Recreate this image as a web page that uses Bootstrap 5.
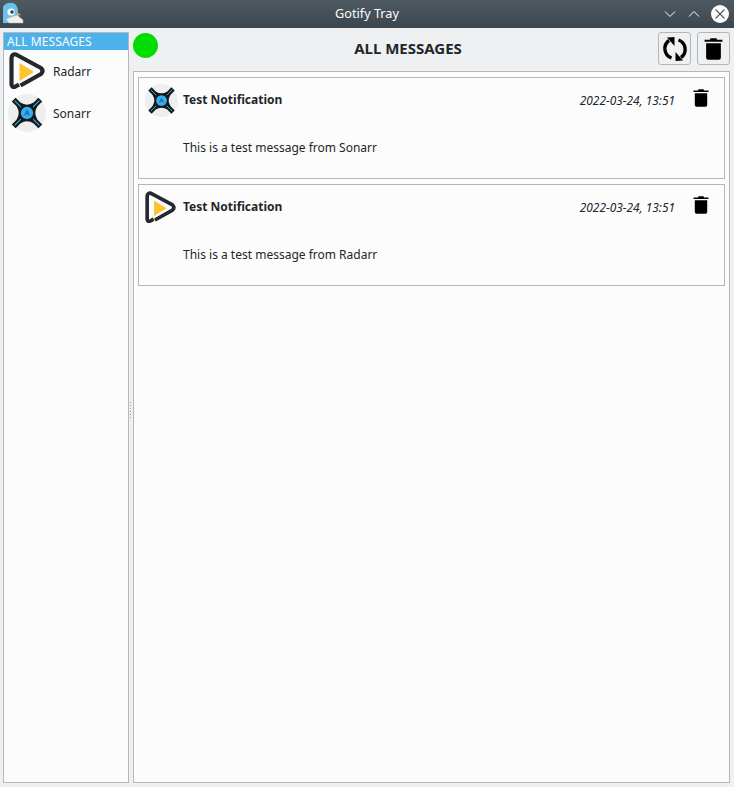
<!DOCTYPE html>
<html lang="en">
<head>
<meta charset="utf-8">
<title>Gotify Tray</title>
<link rel="stylesheet" href="https://cdn.jsdelivr.net/npm/bootstrap@5.3.0/dist/css/bootstrap.min.css">
<style>
html,body{height:100%;margin:0}
body{font-family:"Noto Sans",sans-serif;font-size:12px;color:#232629;background:#eff0f1;overflow:hidden}
.win{width:734px;height:787px}
.tbar{height:28px;background:linear-gradient(#4f5961,#3c464e);color:#fcfcfc;font-size:12.7px;position:relative}
.tbar-logo{position:absolute;left:2px;top:2px}
.tbar-btns{position:absolute;right:5px;top:5px;gap:10px}
.body-wrap{height:759px;padding:4px 4px 4px 3px}
.side{width:126px;background:#fcfcfc;border:1px solid #b5b6b8}
.side-hd{background:#4db2e9;color:#fcfcfc;height:17px;line-height:17px;padding-left:3px;letter-spacing:.1px}
.side-it{height:42px;padding-left:4px;gap:7px}
.side-it svg{flex:none}
.side-it span{padding-top:1px}
.radarr-box{margin:0 1px}
.split{width:4px;position:relative}
.split i{position:absolute;left:1px;width:1px;height:1px;background:#9a9c9e}
.main-col{min-width:0}
.hdr{height:39px}
.dot{width:25px;height:25px;border-radius:50%;background:#00dc00;flex:none;margin-top:1px}
.hd-title{font-size:15px;font-weight:700;line-height:32px}
.sq{width:33px;height:33px;border:1px solid #b5b6b8;border-radius:3px;background:#eff0f1;padding:0;flex:none}
.sq+.sq{margin-left:6px}
.panel{background:#fcfcfc;border:1px solid #b5b6b8;padding:5px 4px;gap:5px}
.msg{height:102px;border:1px solid #b5b6b8;position:relative;padding:0 0 0 44px}
.msg-ic{position:absolute;left:6px;top:6px}
.msg-t{font-weight:700;line-height:16px;padding-top:14px}
.msg-d{position:absolute;right:49px;top:14px;font-style:italic;line-height:16px;font-size:11.9px}
.msg-x{position:absolute;right:15px;top:11px}
.msg-b{line-height:16px;margin-top:32px}
</style>
</head>
<body>
<svg width="0" height="0" class="d-block position-absolute">
<defs>
<symbol id="radarr" viewBox="0 0 36 38">
<path d="M10 32.500 L6.500 34.500 Q3 36 2.500 32.500 L2.500 6 Q3 1.500 7 2.500 L32 16 Q35 19 32 22 L11.500 33.500" fill="none" stroke="#23282e" stroke-width="4.200" stroke-linejoin="round"/>
<path d="M10.500 11 L10.500 29 L25 20Z" fill="#ffc230"/>
</symbol>
<symbol id="sonarr" viewBox="0 0 40 40">
<circle cx="20" cy="20" r="20" fill="#eeeeee"/>
<path d="M4 8 L8 4 L13 9 Q20 13.500 27 9 L32 4 L36 8 L31 13 Q26.500 20 31 27 L36 32 L32 36 L27 31 Q20 26.500 13 31 L8 36 L4 32 L9 27 Q13.500 20 9 13Z" fill="#14191e"/>
<path d="M7 7 L13.500 13.500 M33 7 L26.500 13.500 M7 33 L13.500 26.500 M33 33 L26.500 26.500" stroke="#2cb8ec" stroke-width="1.100" fill="none"/>
<circle cx="20" cy="20" r="6.500" fill="#36b0ee"/>
<path d="M20 16 L23.500 23 L20 21.200 L16.500 23Z" fill="#1b75b5"/>
</symbol>
<symbol id="trash" viewBox="0 0 16 18" preserveAspectRatio="none">
<path d="M5.500 0.300 H10.500 L11 1.500 H15.500 V3 H0.500 V1.500 H5Z" fill="#000"/>
<path d="M1.800 4.200 H14.200 V16 Q14.200 17.800 12.500 17.800 H3.500 Q1.800 17.800 1.800 16Z" fill="#000"/>
</symbol>
</defs>
</svg>
<div class="win d-flex flex-column">
<div class="tbar d-flex align-items-center justify-content-center">
<svg class="tbar-logo" width="22" height="22" viewBox="0 0 22 22">
<path d="M1 21 L1 5 Q4 0 11 1 Q16 3 16 10 L16 13 L8 21Z" fill="#6cc0ee"/>
<circle cx="9" cy="10" r="3.600" fill="#fff"/><circle cx="10" cy="10" r="1.700" fill="#263238"/>
<path d="M15 10 L19 13 L15 14Z" fill="#c9a56b"/>
<path d="M4 17 L15 13 L21 18 L21 21 L7 21Z" fill="#f3efe6" stroke="#b9b5a8" stroke-width=".5"/>
</svg>
<span>Gotify Tray</span>
<div class="tbar-btns d-flex align-items-center">
<svg width="14" height="18" viewBox="0 0 14 18"><path d="M2 6.500 L7 11.500 L12 6.500" fill="none" stroke="#fcfcfc" stroke-width="1"/></svg>
<svg width="14" height="18" viewBox="0 0 14 18"><path d="M2 11.500 L7 6.500 L12 11.500" fill="none" stroke="#fcfcfc" stroke-width="1"/></svg>
<svg width="18" height="18" viewBox="0 0 18 18"><circle cx="9" cy="9" r="9" fill="#fcfcfc"/><path d="M4.500 4.500 L13.500 13.500 M13.500 4.500 L4.500 13.500" stroke="#4d5760" stroke-width="1.100"/></svg>
</div>
</div>
<div class="body-wrap d-flex flex-grow-1">
<div class="side">
<div class="side-hd">ALL MESSAGES</div>
<div class="side-it d-flex align-items-center"><svg class="radarr-box" width="36" height="38"><use href="#radarr"/></svg><span>Radarr</span></div>
<div class="side-it d-flex align-items-center"><svg width="38" height="38"><use href="#sonarr"/></svg><span>Sonarr</span></div>
</div>
<div class="split">
<i style="top:370px"></i><i style="top:373px"></i><i style="top:376px"></i><i style="top:379px"></i><i style="top:382px"></i><i style="top:385px"></i>
</div>
<div class="main-col d-flex flex-column flex-grow-1">
<div class="hdr d-flex">
<div class="dot"></div>
<div class="hd-title flex-grow-1 text-center">ALL MESSAGES</div>
<button class="sq d-flex align-items-center justify-content-center" type="button" aria-label="Refresh">
<svg width="30" height="30" viewBox="0 0 30 30"><path d="M11.500 24 A10 10 0 0 1 9 6.500" fill="none" stroke="#000" stroke-width="3.400"/><path d="M18.500 6 A10 10 0 0 1 21 23.500" fill="none" stroke="#000" stroke-width="3.400"/><path d="M7 3.500 L14.500 3 L14.500 12Z" fill="#000"/><path d="M23 26.500 L15.500 27 L15.500 18Z" fill="#000"/></svg>
</button>
<button class="sq d-flex align-items-center justify-content-center" type="button" aria-label="Delete all">
<svg width="19" height="22"><use href="#trash"/></svg>
</button>
</div>
<div class="panel d-flex flex-column flex-grow-1">
<div class="msg">
<svg class="msg-ic" width="33" height="33"><use href="#sonarr"/></svg>
<div class="msg-t">Test Notification</div>
<div class="msg-d">2022-03-24, 13:51</div>
<svg class="msg-x" width="16" height="18"><use href="#trash"/></svg>
<div class="msg-b">This is a test message from Sonarr</div>
</div>
<div class="msg">
<svg class="msg-ic" width="31" height="33"><use href="#radarr"/></svg>
<div class="msg-t">Test Notification</div>
<div class="msg-d">2022-03-24, 13:51</div>
<svg class="msg-x" width="16" height="18"><use href="#trash"/></svg>
<div class="msg-b">This is a test message from Radarr</div>
</div>
</div>
</div>
</div>
</div>
<script src="https://cdn.jsdelivr.net/npm/bootstrap@5.3.0/dist/js/bootstrap.bundle.min.js"></script>
</body>
</html>
